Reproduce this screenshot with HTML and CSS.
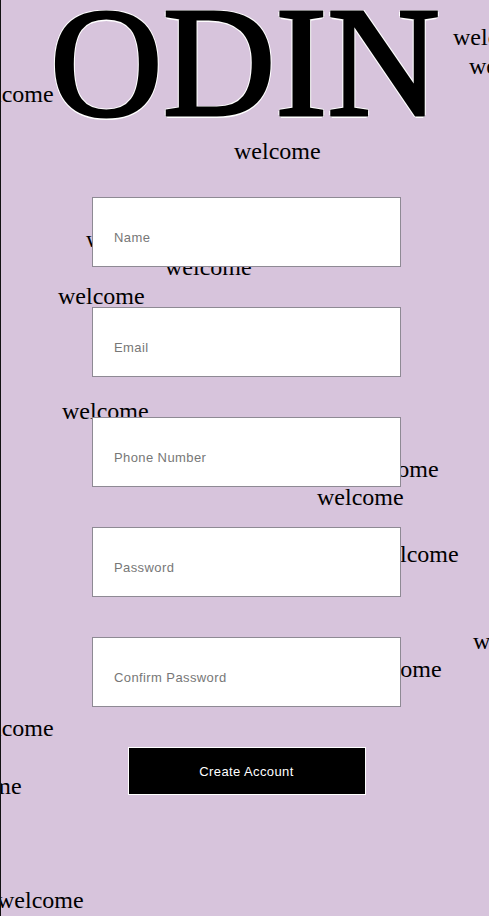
FILE: index.html
```html
<!DOCTYPE html>
<html lang="en">
<head>
<meta charset="utf-8">
<title>ODIN</title>
<link rel="stylesheet" href="styles.css">
</head>
<body>
<div class="page">
  <div class="scatter" aria-hidden="true">
    <span class="word" style="left:-34px;top:82px">welcome</span>
    <span class="word" style="left:452px;top:25px">welcome</span>
    <span class="word" style="left:468px;top:54px">welcome</span>
    <span class="word" style="left:233px;top:139px">welcome</span>
    <span class="word" style="left:85px;top:227px">welcome</span>
    <span class="word" style="left:164px;top:255px">welcome</span>
    <span class="word" style="left:57px;top:284px">welcome</span>
    <span class="word" style="left:61px;top:399px">welcome</span>
    <span class="word" style="left:351px;top:457px">welcome</span>
    <span class="word" style="left:316px;top:485px">welcome</span>
    <span class="word" style="left:371px;top:542px">welcome</span>
    <span class="word" style="left:472px;top:629px">welcome</span>
    <span class="word" style="left:354px;top:657px">welcome</span>
    <span class="word" style="left:-34px;top:716px">welcome</span>
    <span class="word" style="left:-66px;top:774px">welcome</span>
    <span class="word" style="left:-4px;top:888px">welcome</span>
  </div>
  <h1 class="logo">ODIN</h1>
  <form class="signup">
    <input class="field" type="text" placeholder="Name">
    <input class="field" type="email" placeholder="Email">
    <input class="field" type="tel" placeholder="Phone Number">
    <input class="field" type="password" placeholder="Password">
    <input class="field" type="password" placeholder="Confirm Password">
    <button class="submit" type="button">Create Account</button>
  </form>
</div>
</body>
</html>
```
FILE: styles.css
```css
html, body {
  margin: 0;
  padding: 0;
  background: #d7c4dc;
  overflow: hidden;
}

.page {
  position: relative;
  min-height: 916px;
  border-left: 1px solid #111;
  overflow: hidden;
  background: #d7c4dc;
  font-family: "Liberation Serif", "Times New Roman", serif;
}

.scatter {
  position: absolute;
  inset: 0;
  z-index: 0;
}

.word {
  position: absolute;
  font-size: 24px;
  line-height: 1;
  color: #000;
  white-space: nowrap;
}

.logo {
  position: relative;
  z-index: 1;
  margin: 0;
  text-align: center;
  font-family: "Liberation Serif", "Times New Roman", serif;
  font-weight: normal;
  font-size: 156px;
  line-height: 126px;
  height: 130px;
  color: #000;
  -webkit-text-stroke: 3px #000;
  text-shadow: 2.5px 0 #fff, -2.5px 0 #fff, 0 2.5px #fff, 0 -2.5px #fff,
    1.8px 1.8px #fff, -1.8px -1.8px #fff, 1.8px -1.8px #fff, -1.8px 1.8px #fff;
}

.signup {
  position: relative;
  z-index: 1;
  display: flex;
  flex-direction: column;
  align-items: center;
  gap: 40px;
  padding: 67px 0 0 3px;
}

.field {
  box-sizing: border-box;
  width: 309px;
  height: 70px;
  margin: 0;
  padding: 10px 21px 0;
  border: 1px solid #8e8a94;
  border-radius: 0;
  background: #fff;
  font-family: "Liberation Sans", Arial, sans-serif;
  font-size: 13px;
  letter-spacing: 0.4px;
  color: #333;
  outline: none;
}

.field::placeholder {
  color: #777;
}

.submit {
  box-sizing: border-box;
  width: 238px;
  height: 48px;
  margin: 0;
  border: 1px solid #fff;
  border-radius: 0;
  background: #000;
  color: #fff;
  font-family: "Liberation Sans", Arial, sans-serif;
  font-size: 13px;
  letter-spacing: 0.4px;
  cursor: pointer;
}
```
